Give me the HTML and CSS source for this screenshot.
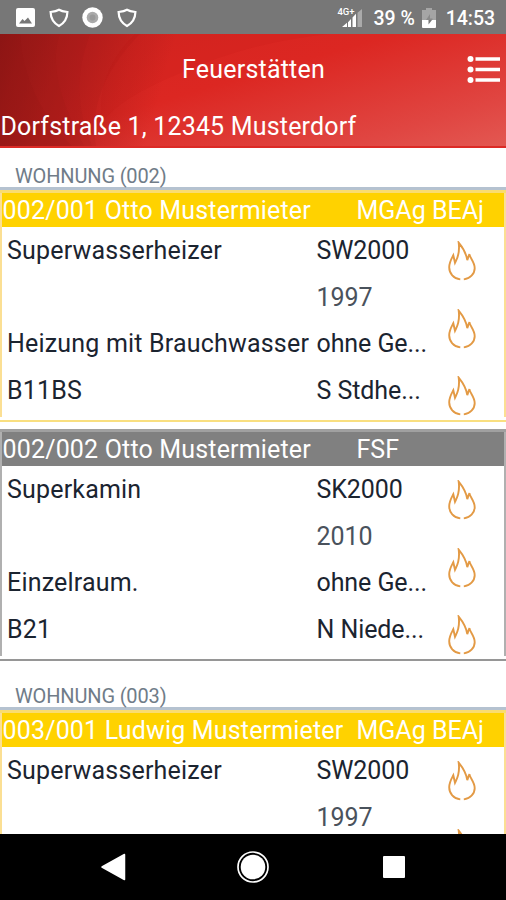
FILE: index.html
```html
<!DOCTYPE html>
<html lang="de">
<head>
<meta charset="utf-8">
<title>Feuerstätten</title>
<link rel="stylesheet" href="styles.css">
</head>
<body>
<svg class="defs" width="0" height="0">
  <symbol id="flame" viewBox="0 0 28 40">
    <path d="M12.3 38.4C5.600 37.500 1.200 32.500 1.200 26.300C1.200 21.500 3.200 18.200 5.300 14.300L7 21.800C8.600 18.500 12.300 13.600 10.700 1.700C14.600 6.500 18.300 12.300 19.300 19.200L21.400 13C21.700 17.100 26.700 20.900 26.700 27.200C26.700 32.700 22 37.800 15.800 38.400" fill="none" stroke="#e39a45" stroke-width="1.900" stroke-linejoin="miter"/>
  </symbol>
  <symbol id="shield" viewBox="0 0 20 20">
    <path d="M10 1.800C7.600 3.200 4.900 3.600 1.600 4C1.700 10.200 4.600 15 10 18C15.400 15 18.300 10.200 18.400 4C15.100 3.600 12.400 3.200 10 1.800Z" fill="none" stroke="#fff" stroke-width="2.200"/>
  </symbol>
</svg>

<header class="status">
  <div class="notifications">
    <svg width="19" height="19" viewBox="0 0 19 19"><rect width="19" height="19" rx="2" fill="#fff"/><path d="M3 15.500L6.500 11L8.500 13L12 9.500L16 15.500Z" fill="#777"/></svg>
    <svg width="20" height="20"><use href="#shield"/></svg>
    <svg width="21" height="21" viewBox="0 0 21 21"><circle cx="10.500" cy="10.500" r="10.200" fill="#fff"/><circle cx="10.500" cy="10.500" r="5.800" fill="#aaa"/><circle cx="10.500" cy="10.500" r="3" fill="#999"/></svg>
    <svg width="20" height="20"><use href="#shield"/></svg>
  </div>
  <div class="signal">
    <span class="net">4G+</span>
    <svg width="20" height="19" viewBox="0 0 20 20" preserveAspectRatio="none"><path d="M20 1V20H15.500V5Z" fill="#aaa"/><path d="M0 20L5 15.500V20ZM6 15L9 11.500V20H6ZM10.500 10L14 6V20H10.500Z" fill="#fff"/></svg>
  </div>
  <span class="percent">39 %</span>
  <svg class="battery" width="14" height="20" viewBox="0 0 14 20"><path d="M4 0H10V2H14V12H0V2H4Z" fill="#a5a5a5"/><path d="M0 12H14V19Q14 20 13 20H1Q0 20 0 19Z" fill="#fff"/><path d="M3 12H6.500V16.500L10 12Z" fill="#777"/><path d="M8 6L4 12H10.500V10.500H8Z" fill="#8a8a8a"/></svg>
  <span class="clock">14:53</span>
</header>

<div class="appbar">
  <svg class="swirl" viewBox="0 0 506 114" preserveAspectRatio="none">
    <defs>
      <linearGradient id="shade" gradientUnits="userSpaceOnUse" x1="0" y1="0" x2="165" y2="45">
        <stop offset="0" stop-color="#7c1515" stop-opacity=".72"/>
        <stop offset=".5" stop-color="#8c1515" stop-opacity=".42"/>
        <stop offset="1" stop-color="#8c1515" stop-opacity="0"/>
      </linearGradient>
    </defs>
    <path d="M0 0H200V114H0Z" fill="url(#shade)"/>
    <path d="M0 0H20Q24 65 72 114H0Z" fill="#7d1010" opacity=".06"/>
    <path d="M0 0H60Q45 40 84 114H0Z" fill="#7d1010" opacity=".05"/>
    <path d="M0 0H90Q68 58 92 114H0Z" fill="#7d1010" opacity=".05"/>
    <path d="M0 0H140Q86 56 96 114H0Z" fill="#7d1010" opacity=".07"/>
    <path d="M135 0H330Q250 8 180 40Q120 65 102 90Q95 40 135 0Z" fill="#b01010" opacity=".08"/>
  </svg>
  <div class="titlebar">
    <h1>Feuerstätten</h1>
    <svg class="menu" width="34" height="28" viewBox="0 0 34 28"><g fill="#fff"><circle cx="3.500" cy="4" r="3"/><circle cx="3.500" cy="14.500" r="3"/><circle cx="3.500" cy="25" r="3"/><path d="M8.500 2.200H33V5.800H8.500ZM8.500 12.700H33V16.300H8.500ZM8.500 23.200H33V26.800H8.500Z"/></g></svg>
  </div>
  <p class="address">Dorfstraße 1, 12345 Musterdorf</p>
</div>

<main>
  <h2>WOHNUNG (002)</h2>
  <section class="card gold">
    <div class="head"><span class="tenant">002/001 Otto Mustermieter</span><span>MGAg BEAj</span></div>
    <div class="body">
      <div class="rows">
        <span class="name">Superwasserheizer</span><span>SW2000</span>
        <span></span><span class="year">1997</span>
        <span class="name">Heizung mit Brauchwasser</span><span>ohne Ge...</span>
        <span class="name">B11BS</span><span>S Stdhe...</span>
      </div>
      <div class="flames"><svg><use href="#flame"/></svg><svg><use href="#flame"/></svg><svg><use href="#flame"/></svg></div>
    </div>
  </section>
  <section class="card gray">
    <div class="head"><span class="tenant">002/002 Otto Mustermieter</span><span>FSF</span></div>
    <div class="body">
      <div class="rows">
        <span class="name">Superkamin</span><span>SK2000</span>
        <span></span><span class="year">2010</span>
        <span class="name">Einzelraum.</span><span>ohne Ge...</span>
        <span class="name">B21</span><span>N Niede...</span>
      </div>
      <div class="flames"><svg><use href="#flame"/></svg><svg><use href="#flame"/></svg><svg><use href="#flame"/></svg></div>
    </div>
  </section>
  <h2 class="next">WOHNUNG (003)</h2>
  <section class="card gold">
    <div class="head"><span class="tenant">003/001 Ludwig Mustermieter</span><span>MGAg BEAj</span></div>
    <div class="body">
      <div class="rows">
        <span class="name">Superwasserheizer</span><span>SW2000</span>
        <span></span><span class="year">1997</span>
      </div>
      <div class="flames"><svg><use href="#flame"/></svg><svg><use href="#flame"/></svg></div>
    </div>
  </section>
</main>

<nav>
  <svg width="26" height="28" viewBox="0 0 26 28"><path d="M2 14L24.500 1.500V26.500Z" fill="#fff" stroke="#fff" stroke-width="1.500" stroke-linejoin="round"/></svg>
  <svg width="32" height="32" viewBox="0 0 32 32"><circle cx="16" cy="16" r="15" fill="none" stroke="#fff" stroke-width="1.700"/><circle cx="16" cy="16" r="12.300" fill="#fff"/></svg>
  <svg width="22" height="22" viewBox="0 0 22 22"><rect width="22" height="22" rx="1" fill="#fff"/></svg>
</nav>
</body>
</html>
```

FILE: styles.css
```css
* { box-sizing: border-box; }

body {
  margin: 0;
  width: 506px;
  height: 900px;
  overflow: hidden;
  display: flex;
  flex-direction: column;
  background: #fff;
  font-family: Roboto, "Liberation Sans", sans-serif;
  font-size: 25px;
  color: #1b2430;
}

.defs { position: absolute; }
svg { display: block; flex: none; }
h1, h2, p { margin: 0; font-weight: 400; }

.status {
  height: 34px;
  flex: none;
  display: flex;
  align-items: center;
  padding: 1px 11px 0 16px;
  background: #777;
  color: #fff;
  font-size: 19.500px;
  font-weight: 500;
}
.status span { padding-top: 2px; }
.notifications { display: flex; align-items: center; gap: 13.700px; margin-right: auto; }
.signal { display: flex; }
.signal svg { margin-left: -13px; }
.status .net { font-size: 9.500px; line-height: 8px; width: 18px; padding: 0; }
.percent { margin-left: 11px; }
.battery { margin-left: 7px; }
.clock { margin-left: 10px; letter-spacing: -0.050px; }

.appbar {
  position: relative;
  height: 114px;
  flex: none;
  color: #fff;
  background: linear-gradient(164deg, #d22420 0%, #dc2722 44%, #e04642 82%, #e35852 100%);
  border-bottom: 2px solid #dc2a26;
}
.swirl { position: absolute; inset: 0; width: 100%; height: 100%; }
.titlebar { position: relative; height: 70px; display: grid; place-items: center; }
h1 { font-size: 25px; letter-spacing: 0.200px; padding-left: 1px; }
.menu { position: absolute; right: 5px; top: 21px; }
.address { position: relative; height: 44px; line-height: 46px; letter-spacing: 0.180px; padding-left: 0.500px; }

main { height: 685.500px; flex: none; overflow: hidden; }
h2 {
  height: 42px;
  padding: 5px 0 0 15px;
  border-bottom: 3px solid #b5c2d0;
  font-size: 20px;
  line-height: 46px;
  letter-spacing: -0.150px;
  color: #707c88;
}
.next { height: 42px; margin-top: 7px; }
.card {
  height: 232px;
  border-top: 3px solid;
  border-bottom: 2px solid;
  padding: 0 2px;
  background:
    linear-gradient(currentColor, currentColor) 0 0 / 2px 224px no-repeat,
    linear-gradient(currentColor, currentColor) 100% 0 / 2px 224px no-repeat;
}
.gold { color: #fbdf93; border-top-color: #f9dc70; border-bottom-color: #f9df80; }
.gray { color: #b0b0b0; border-top-color: #a0a0a0; border-bottom-color: #969696; margin-top: 7px; }
.gold .head { background: #ffd200; }
.gray .head { background: #808080; }
.head { display: flex; height: 34px; line-height: 35px; color: #fff; white-space: nowrap; }
.tenant { width: 354.500px; padding-left: 0.500px; flex: none; letter-spacing: 0.170px; }
.body { display: flex; color: #1b2430; }
.rows {
  display: grid;
  grid-template-columns: 309.500px 126.500px;
  grid-auto-rows: 46.500px;
  line-height: 48.500px;
  padding-left: 5px;
  white-space: nowrap;
  letter-spacing: -0.080px;
}
.name { letter-spacing: 0.190px; }
.year { color: #4a525c; }
.flames { display: flex; flex-direction: column; gap: 27.500px; padding: 14px 0 0 5px; }
.flames svg { width: 28px; height: 40px; }

nav {
  height: 66.500px;
  flex: none;
  display: grid;
  grid-template-columns: repeat(3, 140.500px);
  justify-content: center;
  place-items: center;
  background: #000;
}
```
